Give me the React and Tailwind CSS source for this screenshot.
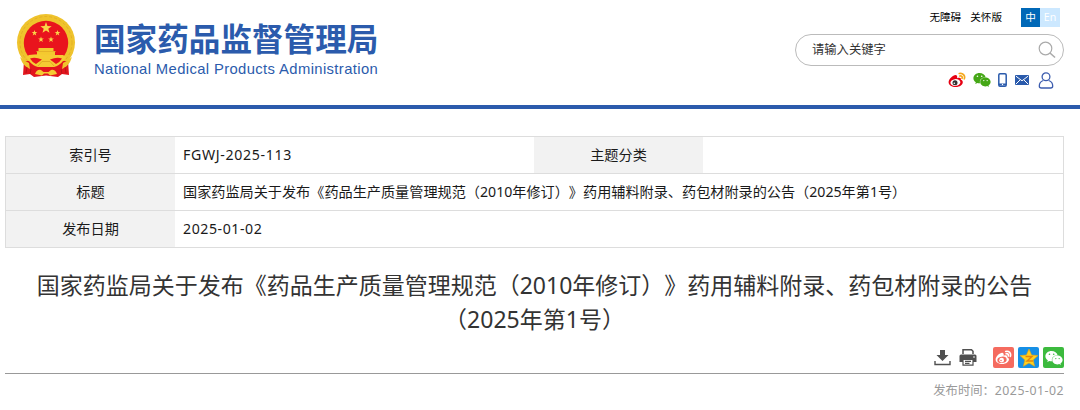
import { FaWeixin } from 'react-icons/fa'

const infoLabel = 'flex items-center justify-center bg-[#f2f2f2]'
const infoValue = 'flex items-center whitespace-nowrap pl-2'

function Star({ x, y, r }) {
  const points = Array.from({ length: 10 }, (_, i) => {
    const a = (Math.PI / 5) * i - Math.PI / 2
    const d = i % 2 ? r * 0.4 : r
    return `${x + d * Math.cos(a)},${y + d * Math.sin(a)}`
  }).join(' ')
  return <polygon points={points} fill="#f9d648" />
}

function Emblem() {
  return (
    <svg viewBox="0 0 60 65" className="h-[65px] w-[60px] shrink-0">
      <ellipse cx="30" cy="29.500" rx="29" ry="28.500" fill="#efc32c" />
      <ellipse cx="30" cy="29.500" rx="26" ry="26" fill="none" stroke="#dfab24" strokeWidth=".8" strokeDasharray="3 2" />
      <circle cx="30" cy="30" r="22.2" fill="#e9141d" />
      <Star x={30} y={15} r={6} />
      <Star x={18.5} y={20} r={3} />
      <Star x={41.5} y={20} r={3} />
      <Star x={25} y={26.500} r={3} />
      <Star x={35} y={26.500} r={3} />
      {/* gate tower */}
      <path d="M22.500 35h15v3h1.500v4H21v-4h1.500z" fill="#f4c92f" />
      <path d="M20 38.500h20" stroke="#dba321" strokeWidth=".6" />
      {/* ribbons */}
      <path d="M8 48 L7 62 L14 61 L18 64 L30 62.500 L42 64 L46 61 L53 62 L52 48Z" fill="#e2151d" />
      <path d="M13 42q7-1 17-.5t17 .5l3 2-3 4q-4 5-9 6H22q-5-1-9-6l-3-4z" fill="#f5cb33" />
      <path d="M14 45.500q5-2 12 1l-6 4.500q-4-2-6-5.500zM46 45.500q-5-2-12 1l6 4.500q4-2 6-5.500z" fill="#e9141d" />
      <path d="M22 53l4-4.500h8l4 4.500" fill="none" stroke="#dba321" strokeWidth=".8" />
      <path d="M4 44q5 4 9 6l1 6q-5-2-8-7zM56 44q-5 4-9 6l-1 6q5-2 8-7z" fill="#efc32c" />
      <path d="M19 61q2-5 6-4l2.500 2h5l2.500-2q4-1 6 4l-7 1.500-2-2h-4l-2 2z" fill="#f5cb33" />
      <path d="M11 54l-1 6M15 56l-1 5M49 54l1 6M45 56l1 5" stroke="#b01117" strokeWidth="0.8" />
    </svg>
  )
}

function Weibo({ body, wave, eye, pupil, className }) {
  return (
    <svg viewBox="0 0 18 16" className={className}>
      <path d="M7.500 3C5 3 .6 7 .6 10.200c0 3 3.400 4.800 7 4.800 4.500 0 7.200-2.500 7.200-4.800 0-1.500-1-2.100-2-2.500.5-1.700-.8-2.600-3.700-1.500C9.500 4.500 9.100 3 7.500 3z" fill={body} />
      <ellipse cx="7.400" cy="10.500" rx="5" ry="3.400" fill={eye} transform="rotate(-7 7.400 10.500)" />
      <circle cx="7" cy="10.800" r="2.500" fill={pupil} />
      <circle cx="6.300" cy="11.200" r=".8" fill={eye} />
      <path d="M11.300 1.500c3.500-.9 6.200 2 5 5.300M11.800 4c1.700-.4 2.800.8 2.300 2.300" fill="none" stroke={wave} strokeWidth="1.700" strokeLinecap="round" />
    </svg>
  )
}

function Header() {
  return (
    <header className="flex h-[109px] justify-between border-b-4 border-[#2b5bac] pr-4 pl-4">
      <div className="flex pt-[13px]">
        <Emblem />
        <div className="ml-[18px] text-[#2b5bac]">
          <h1 className="mt-[6px] text-[31.6px] leading-[40px] font-bold whitespace-nowrap">国家药品监督管理局</h1>
          <p className="mt-px font-['Liberation_Sans',sans-serif] text-[14.8px] leading-[18px] tracking-[0.38px] whitespace-nowrap">
            National Medical Products Administration
          </p>
        </div>
      </div>

      <div className="flex w-[269px] flex-col items-end">
        <div className="mt-2 mr-[4px] flex h-[19px] items-center text-[10.6px] text-black">
          <span>无障碍</span>
          <span className="ml-[9px]">关怀版</span>
          <span className="ml-[19px] flex h-[19px] w-[19px] items-center justify-center bg-[#0068b7] text-white">中</span>
          <span className="flex h-[19px] w-5 items-center justify-center bg-[#cce8ff] text-white">En</span>
        </div>
        <div className="mt-[7px] flex h-8 w-[269px] items-center justify-between rounded-full border border-[#bbb] pr-[7px] pl-4">
          <span className="text-[12.3px] text-[#333]">请输入关键字</span>
          <svg viewBox="0 0 18 18" className="size-[18px]" fill="none" stroke="#aaa" strokeWidth="1.200">
            <circle cx="7.500" cy="7.500" r="6.300" />
            <path d="M12 12l5 4.500" strokeWidth="1.600" />
          </svg>
        </div>
        <div className="mt-[5px] mr-[10px] flex h-[18px] items-center">
          <Weibo body="#e60012" wave="#f5a81c" eye="#fff" pupil="#333" className="h-4 w-[18px]" />
          <FaWeixin className="ml-[7px] size-[18px] text-[#45a716]" />
          <svg viewBox="0 0 9 14" className="ml-[7px] h-[14px] w-[9px]">
            <rect x=".8" y=".8" width="7.400" height="12.400" rx="1.200" fill="none" stroke="#2b5bac" strokeWidth="1.500" />
            <path d="M1 10.500h7v2H1z" fill="#2b5bac" />
            <circle cx="4.500" cy="11.500" r=".7" fill="#fff" />
          </svg>
          <svg viewBox="0 0 14 10" className="ml-2 h-[10px] w-[14px]">
            <rect width="14" height="10" rx="1" fill="#2b5bac" />
            <path d="M1 1.200l6 4.600 6-4.600M1 9l4-4M13 9L9 5" fill="none" stroke="#fff" />
          </svg>
          <svg viewBox="0 0 16 17" className="ml-[9px] h-[17px] w-4" fill="none" stroke="#3c5cae" strokeWidth="1.300">
            <circle cx="8" cy="4.800" r="3.900" />
            <path d="M5.300 8.500C3 9.300 1.300 11.300 1.300 14c0 1.300.8 2 2 2h9.400c1.200 0 2-.7 2-2 0-2.700-1.700-4.700-4-5.500" />
          </svg>
        </div>
      </div>
    </header>
  )
}

function InfoTable() {
  return (
    <section className="mt-[27px] border border-[#ddd] text-[14.150px] text-[#1a1a1a]">
      <div className="grid h-[37px] grid-cols-[169px_359px_169px_1fr] border-b border-[#ddd]">
        <div className={infoLabel}>索引号</div>
        <div className={`${infoValue} tracking-[0.67px]`}>FGWJ-2025-113</div>
        <div className={infoLabel}>主题分类</div>
        <div />
      </div>
      <div className="grid h-[37px] grid-cols-[169px_1fr] border-b border-[#ddd]">
        <div className={infoLabel}>标题</div>
        <div className={infoValue}>
          国家药监局关于发布《药品生产质量管理规范（2010年修订）》药用辅料附录、药包材附录的公告（2025年第1号）
        </div>
      </div>
      <div className="grid h-9 grid-cols-[169px_1fr]">
        <div className={infoLabel}>发布日期</div>
        <div className={`${infoValue} tracking-[0.55px]`}>2025-01-02</div>
      </div>
    </section>
  )
}

function Toolbar() {
  return (
    <div className="flex h-[26px] items-start justify-end">
      <svg viewBox="0 0 17 17" className="mt-[2px] h-[17px] w-[17px]" fill="#505050">
        <path d="M6 1h5v5h3.500l-6 6-6-6H6z" />
        <path d="M1 12v3.500h15V12" fill="none" stroke="#505050" strokeWidth="1.400" />
      </svg>
      <svg viewBox="0 0 18 17" className="mt-[2px] ml-[8px] h-[17px] w-[18px]" fill="#505050">
        <path d="M4 5V.8h8.500L14 2.300V5" fill="none" stroke="#505050" strokeWidth="1.500" />
        <path d="M2 5.500h14a1.500 1.500 0 0 1 1.500 1.500v6H14v-3H4v3H.5V7A1.500 1.500 0 0 1 2 5.500z" />
        <circle cx="15" cy="8" r=".8" fill="#fff" />
        <path d="M4 10.500h10v5.700H4zM6 12.300h6M6 14.300h4.500" fill="#fff" stroke="#505050" strokeWidth="1.200" />
      </svg>
      <div className="ml-4 flex gap-[4px]">
        <span className="flex size-[21px] items-center justify-center rounded-xs bg-[#f56b5f]">
          <Weibo body="#fff" wave="#fff" eye="#f56b5f" pupil="#fff" className="h-[15px] w-[17px]" />
        </span>
        <span className="flex size-[21px] items-center justify-center rounded-xs bg-[#168fe5]">
          <svg viewBox="0 0 20 20" className="size-5">
            <path d="M10 1l2.600 6 6.400.6-4.800 4.300 1.400 6.400L10 15l-5.600 3.300 1.400-6.400L1 7.600 7.400 7z" fill="#ffd01e" stroke="#e7a410" strokeWidth=".6" />
            <path d="M6.500 8.500h6.500l-5 4.500h6" fill="none" stroke="#e4850c" strokeWidth="1.400" />
          </svg>
        </span>
        <span className="flex size-[21px] items-center justify-center rounded-xs bg-[#3cba3e]">
          <FaWeixin className="size-[18px] text-white" />
        </span>
      </div>
    </div>
  )
}

export default function App() {
  return (
    <div className="h-[410px] w-[1080px] overflow-hidden bg-white font-['Noto_Sans','Noto_Sans_CJK_SC',sans-serif] [text-spacing-trim:space-all]">
      <Header />
      <main className="mr-4 ml-[5px]">
        <InfoTable />
        <h2 className="mt-5 text-center text-[23px] leading-[34px] whitespace-nowrap text-[#333]">
          国家药监局关于发布《药品生产质量管理规范（2010年修订）》药用辅料附录、药包材附录的公告
          <br />
          （2025年第1号）
        </h2>
        <div className="mt-[11px] border-b border-[#999]">
          <Toolbar />
        </div>
        <p className="mt-[7px] text-right text-[12.300px] leading-5 text-[#999]">
          发布时间：<span className="tracking-[0.5px]">2025-01-02</span>
        </p>
      </main>
    </div>
  )
}
